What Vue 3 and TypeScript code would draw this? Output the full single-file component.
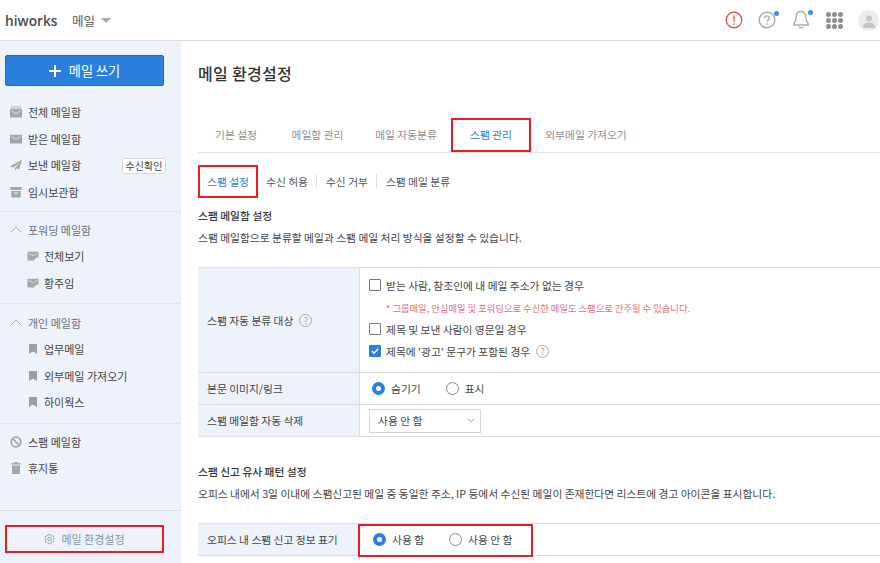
<script setup lang="ts">
interface Item { label: string; icon: string }
const topItems: Item[] = [
  { label: '전체 메일함', icon: 'open' },
  { label: '받은 메일함', icon: 'mail' },
  { label: '보낸 메일함', icon: 'send' },
  { label: '임시보관함', icon: 'box' },
]
const forward = ['전체보기', '황주임']
const personal = ['업무메일', '외부메일 가져오기', '하이웍스']
const tabs = ['기본 설정', '메일함 관리', '메일 자동분류', '스팸 관리', '외부메일 가져오기']
const subs = ['스팸 설정', '수신 허용', '수신 거부', '스팸 메일 분류']
</script>

<template>
  <div class="page">
    <header class="top">
      <div class="brand">hiworks</div>
      <div class="app">메일</div>
      <span class="caret"></span>
      <div class="spacer"></div>
      <svg class="ti alert" width="18" height="18" viewBox="0 0 18 18"><circle cx="9" cy="9" r="7.8" fill="none" stroke="#e0483e" stroke-width="1.2"/><path d="M9 4.500v6M9 12.300v1.400" stroke="#e0483e" stroke-width="1.300" fill="none"/></svg>
      <span class="ti dotwrap">
        <svg width="18" height="18" viewBox="0 0 18 18"><circle cx="9" cy="9" r="7.8" fill="none" stroke="#a9a9a9" stroke-width="1.400"/><path d="M6.600 7.200c0-3.100 4.900-3 4.900-.1 0 1.900-2.400 1.900-2.400 3.700M9.100 12.200v1.500" stroke="#a9a9a9" stroke-width="1.400" fill="none"/></svg>
        <i class="dot"></i>
      </span>
      <span class="ti dotwrap bell">
        <svg width="18" height="20" viewBox="0 0 18 20"><path d="M9 1.500c-3.200 0-4.800 2.400-4.800 5.200 0 3.400-.8 5.300-2.400 7.100v1.200h14.400v-1.200c-1.600-1.800-2.400-3.700-2.400-7.100C13.800 3.900 12.200 1.500 9 1.500z" fill="none" stroke="#a9a9a9" stroke-width="1.300"/><path d="M7 16.800c.5 1.500 3.500 1.500 4 0" fill="none" stroke="#a9a9a9" stroke-width="1.300"/></svg>
        <i class="dot"></i>
      </span>
      <span class="ti grid9"><i v-for="n in 9" :key="n"></i></span>
      <span class="avatar">
        <svg width="12" height="13" viewBox="0 0 12 13"><circle cx="6" cy="3.500" r="3" fill="#c4c4c4"/><path d="M0 13c0-4 2-5.500 6-5.500S12 9 12 13z" fill="#c4c4c4"/></svg>
      </span>
    </header>

    <div class="body">
      <aside class="side">
        <div class="compose-wrap">
          <button class="compose"><span class="plus"></span>메일 쓰기</button>
        </div>
        <ul class="group">
          <li v-for="it in topItems" :key="it.label" class="row">
            <svg class="ic" width="12" height="12" viewBox="0 0 12 12">
              <template v-if="it.icon === 'open'">
                <path d="M1 .8h10M.5 2.300h11" stroke="#b5b8bd" stroke-width=".9" fill="none"/>
                <path d="M0 3.200h12V11.500H0z" fill="#a3a6ab"/>
                <path d="M1.500 5l4.500 2.800L10.500 5" fill="none" stroke="#e2e4e8"/>
              </template>
              <template v-else-if="it.icon === 'mail'">
                <path d="M0 1.800h12V10.500H0z" fill="#a3a6ab"/>
                <path d="M1.500 3.500L6 6.300l4.500-2.800" fill="none" stroke="#e2e4e8"/>
              </template>
              <path v-else-if="it.icon === 'send'" d="M12 .8L0 7.300l3.400 1.200L10 3.200 4.800 9.200v2.500l2-2.100 2.300 1z" fill="#a3a6ab"/>
              <path v-else d="M.5 1h11v3H.5z M1.300 5h9.400v6.500H1.300z M4 6.400v1h4v-1z" fill="#a3a6ab" fill-rule="evenodd"/>
            </svg>
            <span>{{ it.label }}</span>
            <span v-if="it.icon === 'send'" class="chip">수신확인</span>
          </li>
        </ul>
        <div class="sec">
          <div class="sec-title"><svg width="12" height="7" viewBox="0 0 12 7"><path d="M.5 6.500L6 1l5.500 5.500" fill="none" stroke="#a9afb8"/></svg>포워딩 메일함</div>
          <div v-for="f in forward" :key="f" class="row sub">
            <svg class="ic" width="11" height="10" viewBox="0 0 11 10">
              <path d="M0 .8h11V6.500H8.300V8H6.800v1.500H0z" fill="#a3a6ab"/>
              <path d="M1.200 2.300L5.500 5l4.300-2.700" fill="none" stroke="#e2e4e8" stroke-width=".9"/>
            </svg>
            <span>{{ f }}</span>
          </div>
        </div>
        <div class="sec">
          <div class="sec-title"><svg width="12" height="7" viewBox="0 0 12 7"><path d="M.5 6.500L6 1l5.500 5.500" fill="none" stroke="#a9afb8"/></svg>개인 메일함</div>
          <div v-for="p in personal" :key="p" class="row sub">
            <svg class="ic" width="8" height="10" viewBox="0 0 8 10"><path d="M0 0h8v10L4 7.500 0 10z" fill="#9b9ea3"/></svg>
            <span>{{ p }}</span>
          </div>
        </div>
        <div class="sec tail">
          <div class="row">
            <svg class="ic" width="12" height="12" viewBox="0 0 12 12"><circle cx="6" cy="6" r="4.800" fill="none" stroke="#a3a6ab" stroke-width="1.800"/><path d="M2.700 2.700l6.600 6.600" stroke="#a3a6ab" stroke-width="1.800"/></svg>
            <span>스팸 메일함</span>
          </div>
          <div class="row">
            <svg class="ic" width="12" height="12" viewBox="0 0 12 12"><path d="M4.500 0h3v1.200H11v1.300H1V1.200h3.500z M2 3.500h8V12H2z" fill="#a3a6ab"/></svg>
            <span>휴지통</span>
          </div>
        </div>
        <div class="foot">
          <div class="env marked">
            <svg width="11" height="12" viewBox="0 0 12 12"><path d="M6 .8l4.500 2.600v5.200L6 11.200 1.500 8.600V3.400z" fill="none" stroke="#9aa5b5" stroke-width="1.200" stroke-dasharray="2.500 .6"/><circle cx="6" cy="6" r="1.900" fill="none" stroke="#9aa5b5" stroke-width="1.200"/></svg>
            <span>메일 환경설정</span>
          </div>
        </div>
      </aside>

      <main class="main">
        <h1>메일 환경설정</h1>
        <nav class="tabs">
          <span v-for="(t, i) in tabs" :key="t" class="tab" :class="{ on: i === 3, marked: i === 3 }">{{ t }}</span>
        </nav>
        <nav class="subs">
          <span v-for="(s, i) in subs" :key="s" class="subtab" :class="{ on: i === 0, marked: i === 0, sep: i > 1 }">{{ s }}</span>
        </nav>

        <h2>스팸 메일함 설정</h2>
        <p class="desc">스팸 메일함으로 분류할 메일과 스팸 메일 처리 방식을 설정할 수 있습니다.</p>

        <div class="tbl">
          <div class="tr tall">
            <div class="th">스팸 자동 분류 대상<span class="help">?</span></div>
            <div class="td col">
              <label class="check"><i class="box"></i>받는 사람, 참조인에 내 메일 주소가 없는 경우</label>
              <div class="warn">* 그룹메일, 안심메일 및 포워딩으로 수신한 메일도 스팸으로 간주될 수 있습니다.</div>
              <label class="check second"><i class="box"></i>제목 및 보낸 사람이 영문일 경우</label>
              <label class="check third">
                <i class="box ticked"><svg width="10" height="10" viewBox="0 0 11 11"><path d="M2 5.500l2.500 2.500L9 3" fill="none" stroke="#fff" stroke-width="1.500"/></svg></i>
                제목에 '광고' 문구가 포함된 경우<span class="help">?</span>
              </label>
            </div>
          </div>
          <div class="tr r2">
            <div class="th">본문 이미지/링크</div>
            <div class="td radios">
              <label class="radio"><i class="rd on"></i>숨기기</label>
              <label class="radio"><i class="rd"></i>표시</label>
            </div>
          </div>
          <div class="tr r2">
            <div class="th">스팸 메일함 자동 삭제</div>
            <div class="td">
              <div class="select">사용 안 함
                <svg width="8" height="5" viewBox="0 0 8 5"><path d="M.5.500L4 4 7.500.500" fill="none" stroke="#aaa"/></svg>
              </div>
            </div>
          </div>
        </div>

        <h2 class="h2b">스팸 신고 유사 패턴 설정</h2>
        <p class="desc descb">오피스 내에서 3일 이내에 스팸신고된 메일 중 동일한 주소, IP 등에서 수신된 메일이 존재한다면 리스트에 경고 아이콘을 표시합니다.</p>

        <div class="tbl tbl2">
          <div class="tr r3">
            <div class="th narrow">오피스 내 스팸 신고 정보 표기</div>
            <div class="td radios wide">
              <label class="radio"><i class="rd on"></i>사용 함</label>
              <label class="radio"><i class="rd"></i>사용 안 함</label>
            </div>
          </div>
        </div>
      </main>
    </div>
  </div>
</template>

<style>
html, body { margin: 0; overflow: hidden; background: #fff; }
</style>

<style scoped>
.page {
  width: 880px; height: 563px; overflow: hidden; display: flex; flex-direction: column;
  font-family: "Noto Sans CJK KR", "Noto Sans", sans-serif; font-size: 11px; color: #333;
}
.top {
  height: 40px; flex: none; border-bottom: 1px solid #dcdcdc; display: flex; align-items: center;
  padding: 0 1px 0 5px;
}
.brand { font: 600 13.700px "Open Sans", sans-serif; color: #4a4a4a; width: 67px; }
.app { font-size: 12.500px; color: #555; }
.caret { width: 0; height: 0; border: 5px solid transparent; border-top: 5px solid #aaa; border-bottom: 0; margin-left: 6px; }
.spacer { flex: 1; }
.ti { display: flex; }
.alert { margin-right: 15px; }
.dotwrap { position: relative; margin-right: 16px; }
.bell { margin-right: 16px; }
.dot { position: absolute; top: 0; right: -3px; width: 5px; height: 5px; border-radius: 50%; background: #3c8fe6; }
.grid9 { display: grid; grid-template-columns: repeat(3, 5px); gap: 1px; margin-right: 15px; }
.grid9 i { width: 5px; height: 5px; border-radius: 50%; background: #8f8f8f; }
.avatar { width: 21px; height: 21px; border-radius: 50%; background: #ececec; display: flex; align-items: flex-end; justify-content: center; }
.avatar svg { margin-bottom: 3px; }

.body { flex: 1; display: flex; min-height: 0; }
.side { width: 181px; flex: none; background: #eef3fb; display: flex; flex-direction: column; }
.compose-wrap { padding: 14px 17px 0 5px; }
.compose {
  width: 100%; height: 31px; border: 1px solid #1e6cc0; border-radius: 2px; background: #2a80dc; color: #fff;
  font: 13.200px "Noto Sans CJK KR", sans-serif; display: flex; align-items: center; justify-content: center; gap: 8px; padding: 0;
}
.plus { width: 12px; height: 12px; display: block; background: linear-gradient(#fff, #fff) center/12px 2px no-repeat, linear-gradient(#fff, #fff) center/2px 12px no-repeat; }
.group { list-style: none; margin: 0; padding: 13px 0 6px; border-bottom: 1px solid #dfe4ee; }
.row { height: 26.500px; display: flex; align-items: center; padding-left: 10px; color: #444; position: relative; }
.row .ic { margin-right: 6px; flex: none; width: 12px; }
.row.sub { padding-left: 27px; }
.row.sub .ic { margin-right: 5px; }
.chip {
  position: absolute; left: 122px; top: 6px; height: 16px; width: 44px; box-sizing: border-box; background: #fff; border: 1px solid #d8d8d8; border-radius: 2px;
  font-size: 10px; line-height: 14px; text-align: center; color: #444;
}
.sec { border-bottom: 1px solid #dfe4ee; padding: 4px 0 7px; }
.sec + .sec { padding-top: 5px; }
.sec-title { height: 27px; display: flex; align-items: center; gap: 6px; padding-left: 10px; color: #666f80; }
.sec.tail { border-bottom: 1px solid #d9dde6; padding: 5px 0 28px; }
.foot { padding: 14px 17px 0 5px; }
.env { height: 28px; display: flex; align-items: center; justify-content: center; gap: 6px; color: #8593a8; }
.marked { position: relative; }
.marked::after { content: ""; position: absolute; inset: 0; border: 2px solid #ed1c24; pointer-events: none; }

.main { flex: 1; min-width: 0; padding-left: 17px; font-size: 10.750px; }
h1 { margin: 21px 0 0; height: 22px; font-size: 16px; letter-spacing: .3px; line-height: 22px; font-weight: 500; color: #333; }
.tabs { margin-top: 34px; height: 34px; display: flex; border-bottom: 1px solid #e5e5e5; }
.tab { flex: none; text-align: center; line-height: 34px; color: #8f8f8f; }
.tab:nth-child(1) { width: 76px; }
.tab:nth-child(2) { width: 87px; }
.tab:nth-child(3) { width: 90px; }
.tab:nth-child(4) { width: 80px; color: #2a80dc; }
.tab:nth-child(5) { width: 110px; }
.subs { display: flex; align-items: center; height: 33px; margin-top: 12px; }
.subtab { padding: 0 8px 0 10px; line-height: 33px; position: relative; color: #555; }
.subtab:nth-child(2) { padding-left: 8px; }
.subtab.on { color: #2a80dc; width: 60px; box-sizing: border-box; text-align: center; padding: 0; }
.subtab.sep::before { content: ""; position: absolute; left: 0; top: 9px; height: 14px; width: 1px; background: #ddd; }
h2 { margin: 9px 0 0; font-size: 10.750px; line-height: 18px; font-weight: 500; color: #333; }
.desc { margin: 4px 0 0; line-height: 18px; color: #444; }
.tbl { margin-top: 20px; border-top: 1px solid #dcdcdc; }
.tr { display: flex; border-bottom: 1px solid #dcdcdc; }
.th { width: 162px; flex: none; box-sizing: border-box; background: #eef3fb; border-right: 1px solid #dcdcdc; padding-left: 9px; display: flex; align-items: center; color: #444; }
.td { flex: 1; padding-left: 9px; display: flex; align-items: center; }
.tall { height: 104px; }
.r2 { height: 31px; }
.col { flex-direction: column; align-items: flex-start; padding-top: 8px; box-sizing: border-box; }
.check { display: flex; align-items: center; height: 18px; color: #444; }
.box { width: 10px; height: 10px; border: 1px solid #777; border-radius: 1px; margin-right: 5px; display: flex; background: #fff; }
.box.ticked { background: #2a80dc; border-color: #2a80dc; }
.warn { font-size: 9.300px; color: #e0707a; height: 18px; line-height: 18px; margin: 5px 0 0 17px; }
.second { margin-top: 3px; }
.third { margin-top: 4px; }
.help { display: inline-block; width: 11px; height: 11px; border: 1px solid #aaa; border-radius: 50%; font-size: 9px; line-height: 11px; text-align: center; color: #999; margin-left: 6px; }
.radios { gap: 25px; padding-left: 12px; }
.radio { display: flex; align-items: center; gap: 6px; color: #444; }
.rd { width: 11px; height: 11px; border: 1px solid #888; border-radius: 50%; background: #fff; }
.rd.on { width: 5px; height: 5px; border: 4px solid #2a80dc; background: #fff; }
.select { width: 112px; height: 24px; box-sizing: border-box; border: 1px solid #d5d5d5; display: flex; align-items: center; justify-content: space-between; padding: 0 5px 0 8px; color: #444; }
.h2b { margin-top: 26px; }
.descb { margin-top: 4px; }
.tbl2 { margin-top: 20px; }
.r3 { height: 31px; }
.narrow { width: 160px; border-right: 0; }
.wide { position: relative; flex: none; width: 175px; padding-left: 15px; box-sizing: border-box; gap: 25px; }
.wide::after { content: ""; position: absolute; inset: 0 0 -2px 0; border: 2px solid #ed1c24; pointer-events: none; }
</style>
